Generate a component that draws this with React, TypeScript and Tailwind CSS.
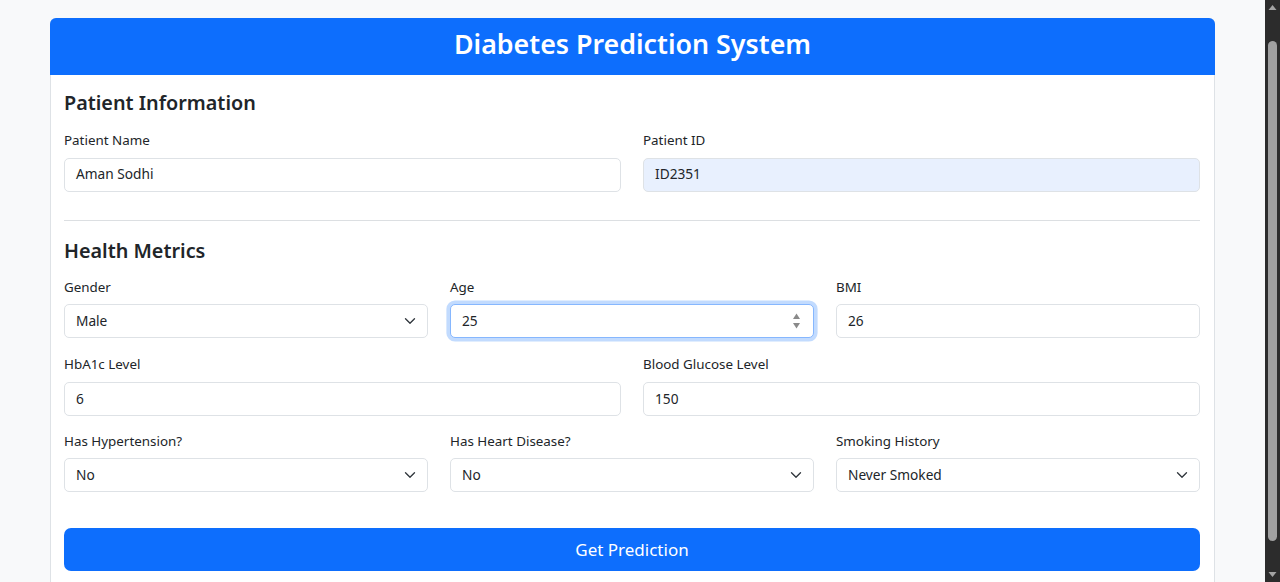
import React from "react";

const font = { fontFamily: '"Noto Sans", "Open Sans", sans-serif' };

function Chevron() {
  return (
    <svg
      className="pointer-events-none absolute right-[12px] top-1/2 -translate-y-1/2"
      width="12"
      height="9"
      viewBox="0 0 16 12"
      fill="none"
    >
      <path d="m2 3 6 6 6-6" stroke="#343a40" strokeWidth="1.8" strokeLinecap="round" strokeLinejoin="round" />
    </svg>
  );
}

function Spinner() {
  return (
    <svg
      className="pointer-events-none absolute right-[13px] top-1/2 -translate-y-1/2"
      width="9"
      height="20"
      viewBox="0 0 9 20"
    >
      <path d="M4.5 2.5 L8 8 L1 8 Z" fill="#8a8a8a" />
      <path d="M1 12 L8 12 L4.5 17.5 Z" fill="#8a8a8a" />
    </svg>
  );
}

function Field({
  label,
  value,
  kind = "text",
  bg = "bg-white",
}: {
  label: string;
  value: string;
  kind?: "text" | "select" | "number";
  bg?: string;
}) {
  const focused = kind === "number";
  return (
    <div className="flex flex-col">
      <label className="mb-[6px] text-[13.4px] leading-[21.6px] text-[#212529]">{label}</label>
      <div className="relative">
        <div
          className={`flex h-[34px] items-center rounded-[5px] border px-[11px] text-[13.7px] text-[#212529] ${bg} ${
            focused
              ? "border-[#86b7fe] shadow-[0_0_0_3.6px_rgba(13,110,253,0.25)]"
              : "border-[#dee2e6]"
          }`}
        >
          {value}
        </div>
        {kind === "select" && <Chevron />}
        {kind === "number" && <Spinner />}
      </div>
    </div>
  );
}

export default function App() {
  return (
    <div className="flex h-[582px] w-full overflow-hidden bg-[#f8f9fa]" style={font}>
      <main className="flex-1 overflow-hidden pt-[18px]">
        <div className="mx-[50px] rounded-[6px] border border-[#dee2e6] bg-white">
          <div className="-mx-px -mt-px flex h-[57px] items-center justify-center rounded-t-[6px] bg-[#0d6efd] pb-[5px]">
            <h2 className="text-[26.8px] font-semibold leading-[34px] text-white">Diabetes Prediction System</h2>
          </div>
          <div className="flex flex-col pl-[13px] pr-[14px] pt-[15px]">
            <h4 className="mb-[14px] text-[19.8px] font-semibold leading-[26px] text-[#212529]">Patient Information</h4>
            <div className="mb-[14px] grid grid-cols-2 gap-x-[22px]">
              <Field label="Patient Name" value="Aman Sodhi" />
              <Field label="Patient ID" value="ID2351" bg="bg-[#e8f0fe]" />
            </div>
            <hr className="mb-[17px] mt-[14px] border-t border-[#dcdfe2]" />
            <h4 className="mb-[13px] text-[19.8px] font-semibold leading-[26px] text-[#212529]">Health Metrics</h4>
            <div className="mb-[16px] grid grid-cols-3 gap-x-[22px]">
              <Field label="Gender" value="Male" kind="select" />
              <Field label="Age" value="25" kind="number" />
              <Field label="BMI" value="26" />
            </div>
            <div className="mb-[15px] grid grid-cols-2 gap-x-[22px]">
              <Field label="HbA1c Level" value="6" />
              <Field label="Blood Glucose Level" value="150" />
            </div>
            <div className="mb-[36px] grid grid-cols-3 gap-x-[22px]">
              <Field label="Has Hypertension?" value="No" kind="select" />
              <Field label="Has Heart Disease?" value="No" kind="select" />
              <Field label="Smoking History" value="Never Smoked" kind="select" />
            </div>
            <button className="flex h-[43px] w-full items-center justify-center rounded-[7px] bg-[#0d6efd] text-[17px] text-white">
              Get Prediction
            </button>
            <div className="h-[20px]" />
          </div>
        </div>
      </main>
      <div className="flex h-[582px] w-[15px] flex-col items-center bg-[#2c2c2c]">
        <svg width="15" height="15" viewBox="0 0 15 15" className="shrink-0">
          <path d="M7.5 5 L11.5 10 L3.5 10 Z" fill="#a3a3a3" />
        </svg>
        <div className="my-[26px] w-[9px] flex-1 rounded-[5px] bg-[#a0a0a0]" />
        <svg width="15" height="15" viewBox="0 0 15 15" className="shrink-0">
          <path d="M3.5 5 L11.5 5 L7.5 10 Z" fill="#a3a3a3" />
        </svg>
      </div>
    </div>
  );
}
